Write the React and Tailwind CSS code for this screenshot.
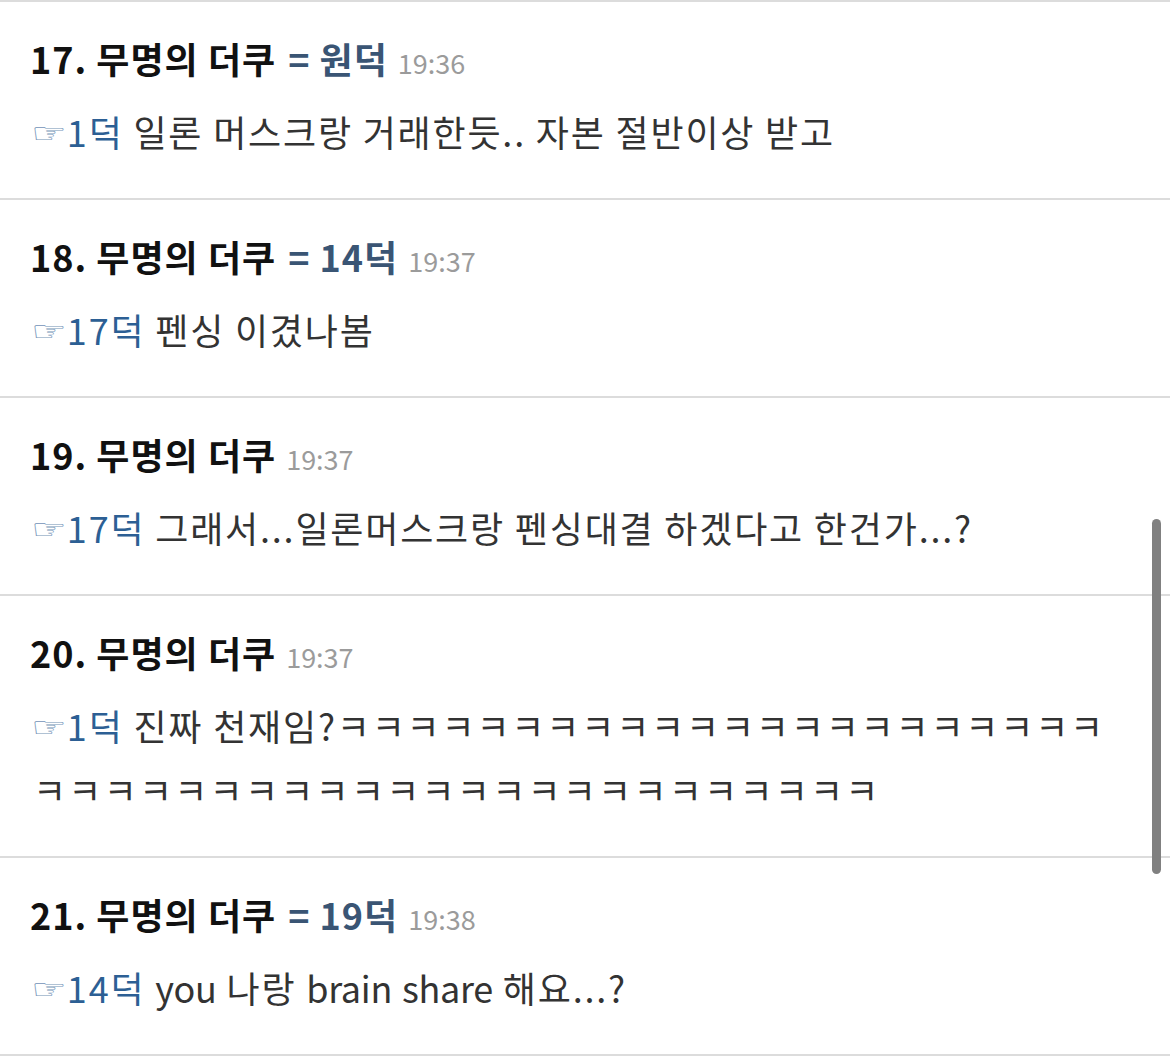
import React from "react";

const font = { fontFamily: '"Noto Sans CJK KR", "Noto Sans", sans-serif' };

const Latin = ({ children }) => <span className="tracking-[-0.3px]">{children}</span>;

const comments = [
  { no: 17, reply: "원덕", time: "19:36", ref: "1덕", lines: ["일론 머스크랑 거래한듯.. 자본 절반이상 받고"] },
  { no: 18, reply: "14덕", time: "19:37", ref: "17덕", lines: ["펜싱 이겼나봄"] },
  { no: 19, reply: null, time: "19:37", ref: "17덕", lines: ["그래서...일론머스크랑 펜싱대결 하겠다고 한건가...?"] },
  {
    no: 20,
    reply: null,
    time: "19:37",
    ref: "1덕",
    lines: ["진짜 천재임?" + "ㅋ".repeat(22), "ㅋ".repeat(24)],
  },
  {
    no: 21,
    reply: "19덕",
    time: "19:38",
    ref: "14덕",
    lines: [
      <>
        <Latin>you</Latin> 나랑 <Latin>brain</Latin> <Latin>share</Latin> 해요...?
      </>,
    ],
  },
];

const Comment = ({ c }) => (
  <div className="border-b-2 border-[#dcdcdc] pt-[31px] pb-[35px] pl-[30px] pr-[40px]">
    <div className="flex items-baseline h-[50px] leading-[50px] whitespace-nowrap overflow-hidden">
      <span className="text-[36px] font-bold text-[#111] tracking-[1px]">
        {c.no}. 무명의 더쿠
      </span>
      {c.reply && (
        <span className="text-[36px] font-bold text-[#3a5574] ml-[12px] tracking-[1px]">
          = {c.reply}
        </span>
      )}
      <span className="text-[27px] text-[#9b9b9b] ml-[10px]">{c.time}</span>
    </div>
    <div className="mt-[16px] text-[36px] leading-[64px] text-[#333] whitespace-nowrap tracking-[1.8px]">
      {c.lines.map((l, i) => (
        <div key={i} className={"h-[64px] overflow-hidden " + (i === 0 ? "" : "pl-[3px] tracking-[2.2px]")}>
          {i === 0 && (
            <>
              <span
                className="inline-block text-[40px] leading-[40px] text-[#7393b8] ml-[1px] tracking-normal scale-y-[0.7]"
                style={{ fontFamily: '"DejaVu Sans", sans-serif' }}
              >
                ☞
              </span>
              <span className="text-[#2c5f94]">{c.ref}</span>{" "}
            </>
          )}
          {l}
        </div>
      ))}
    </div>
  </div>
);

export default function App() {
  return (
    <div className="relative w-[1170px] h-[1056px] bg-white overflow-hidden" style={font}>
      <div className="border-t-2 border-[#dcdcdc]">
        {comments.map((c) => (
          <Comment key={c.no} c={c} />
        ))}
      </div>
      <div className="absolute left-[1152px] top-[519px] w-[9px] h-[355px] rounded-full bg-[#808080]" />
    </div>
  );
}
